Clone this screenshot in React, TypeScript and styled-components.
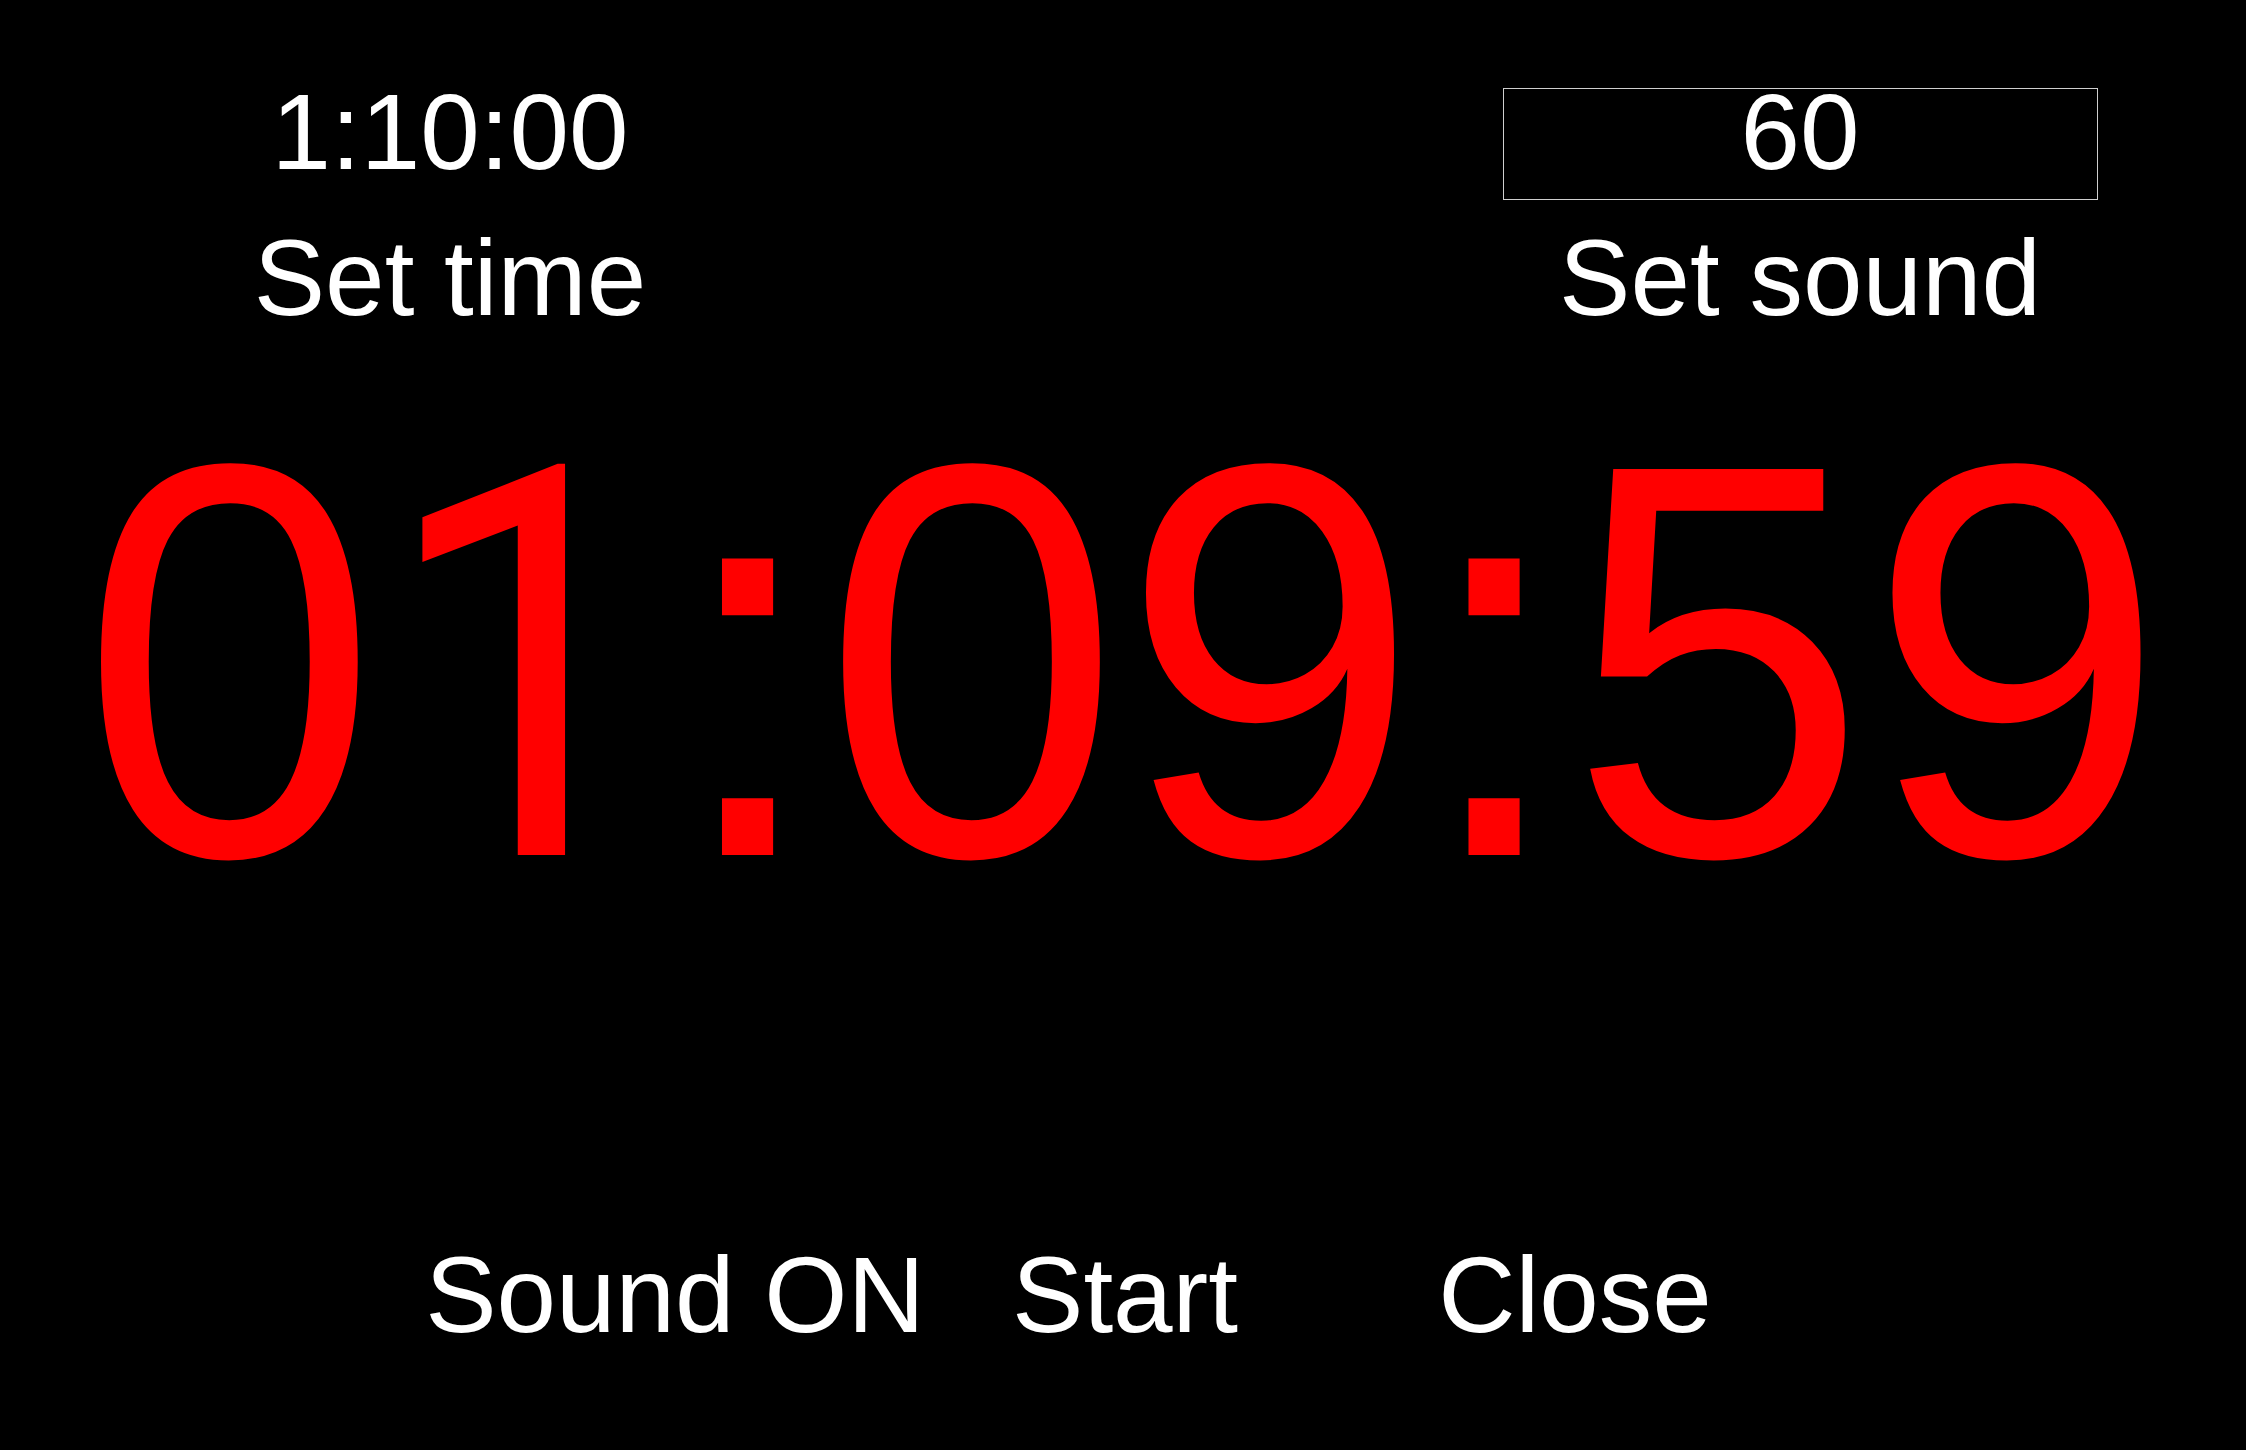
import React from "react";
import styled, { createGlobalStyle } from "styled-components";

const GlobalStyle = createGlobalStyle`
  html, body {
    margin: 0;
    padding: 0;
    background: #000;
    overflow: hidden;
  }
  body {
    font-family: "Liberation Sans", Arial, Helvetica, sans-serif;
    color: #fff;
  }
`;

const Screen = styled.main`
  width: 100vw;
  height: 1450px;
  background: #000;
  display: flex;
  flex-direction: column;
  overflow: hidden;
`;

const TopRow = styled.section`
  display: grid;
  grid-template-columns: repeat(5, 450px);
  padding-top: 88px;
`;

const Setting = styled.div<{ $from: number; $to: number }>`
  grid-column: ${(p) => p.$from} / ${(p) => p.$to};
  display: flex;
  flex-direction: column;
  align-items: center;
`;

const ValueBox = styled.div<{ $framed?: boolean }>`
  box-sizing: border-box;
  height: 112px;
  width: ${(p) => (p.$framed ? "595px" : "auto")};
  border: 1px solid ${(p) => (p.$framed ? "#cfcfcf" : "transparent")};
  font-size: 107px;
  line-height: 86px;
  text-align: center;
  color: #fff;
  white-space: nowrap;
`;

const Label = styled.div`
  margin-top: 25px;
  font-size: 107px;
  line-height: 107px;
  color: #fff;
  white-space: nowrap;
`;

const Countdown = styled.div`
  margin-top: 69px;
  height: 537px;
  font-size: 537px;
  line-height: 537px;
  color: #ff0000;
  text-align: center;
  white-space: nowrap;
  transform: scaleY(1.045);
  transform-origin: 50% 455px;
`;

const One = styled.span`
  font-family: Roboto, "Liberation Sans", Arial, sans-serif;
  font-size: 0.975em;
  line-height: 0;
`;

const Controls = styled.nav`
  margin-top: 304px;
  display: grid;
  grid-template-columns: repeat(5, 450px);
`;

const ControlButton = styled.button<{ $col: number }>`
  grid-column: ${(p) => p.$col};
  justify-self: center;
  background: none;
  border: none;
  padding: 0;
  margin: 0;
  font-family: "Liberation Sans", Arial, Helvetica, sans-serif;
  font-size: 107px;
  line-height: 107px;
  color: #fff;
  white-space: nowrap;
  cursor: pointer;
`;

export default function App() {
  return (
    <>
      <GlobalStyle />
      <Screen>
        <TopRow>
          <Setting $from={1} $to={3}>
            <ValueBox>1:10:00</ValueBox>
            <Label>Set time</Label>
          </Setting>
          <Setting $from={4} $to={6}>
            <ValueBox $framed>60</ValueBox>
            <Label>Set sound</Label>
          </Setting>
        </TopRow>
        <Countdown>
          0<One>1</One>:09:59
        </Countdown>
        <Controls>
          <ControlButton $col={2}>Sound ON</ControlButton>
          <ControlButton $col={3}>Start</ControlButton>
          <ControlButton $col={4}>Close</ControlButton>
        </Controls>
      </Screen>
    </>
  );
}
